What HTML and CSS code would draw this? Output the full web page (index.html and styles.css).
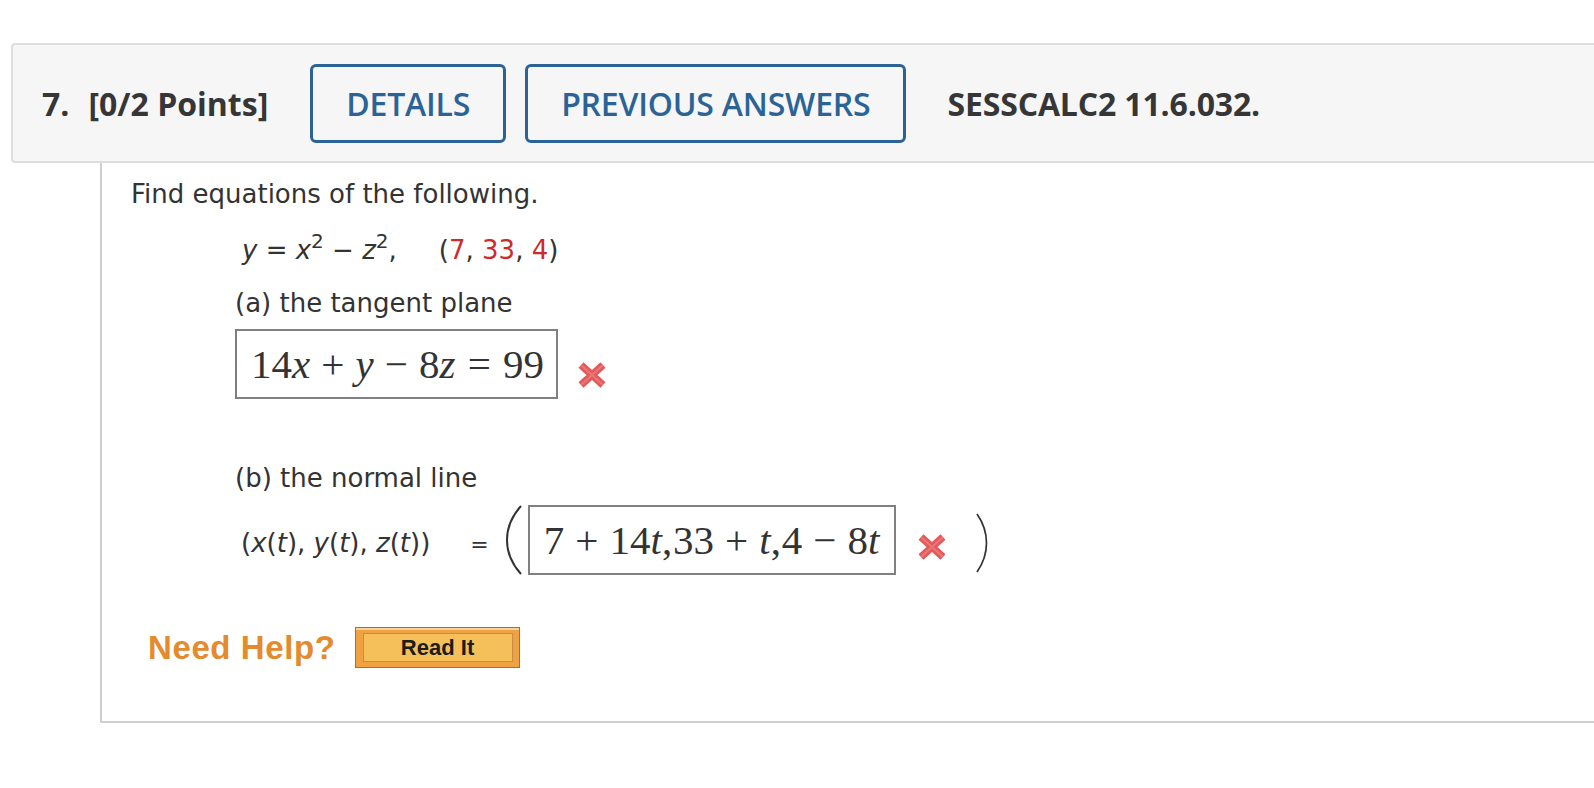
FILE: index.html
```html
<!DOCTYPE html>
<html>
<head>
<meta charset="utf-8">
<link rel="stylesheet" href="styles.css">
</head>
<body>
<div class="page">
  <div class="qheader">
    <span class="qnum">7.</span>
    <span class="qpts">[0/2 Points]</span>
    <div class="qbtn">DETAILS</div>
    <div class="qbtn">PREVIOUS ANSWERS</div>
    <span class="qref">SESSCALC2 11.6.032.</span>
  </div>
  <div class="qbody">
    <p class="intro">Find equations of the following.</p>
    <div class="indent">
      <p class="eq"><i>y</i> = <i>x</i><sup>2</sup> − <i>z</i><sup>2</sup>,<span class="pt">(<span class="red">7</span>, <span class="red">33</span>, <span class="red">4</span>)</span></p>
      <p class="part">(a) the tangent plane</p>
      <div class="ansrow">
        <div class="mbox"><span class="mn">14</span><span class="mi">x</span><span class="mo">+</span><span class="mi">y</span><span class="mo">−</span><span class="mn">8</span><span class="mi">z</span><span class="mrel">=</span><span class="mn">99</span></div>
        <svg class="xmark xmark-a" width="28" height="26" viewBox="0 0 28 26"><path d="M3 3 L25 23 M25 3 L3 23" stroke="#e35a5c" stroke-width="7.5" fill="none"/><path d="M3 3 L25 23 M25 3 L3 23" stroke="#f09090" stroke-width="2" fill="none" opacity="0.55"/></svg>
      </div>
      <p class="part partb">(b) the normal line</p>
      <div class="ansrow2">
        <span class="lbl">(<i>x</i>(<i>t</i>), <i>y</i>(<i>t</i>), <i>z</i>(<i>t</i>))<span class="eqsign">=</span></span>
        <svg class="paren lparen" width="20" height="70" viewBox="0 0 20 70"><path d="M18 1 C8 12 4 24 4 35 C4 46 8 58 18 69" stroke="#333" stroke-width="2" fill="none"/></svg>
        <div class="mbox mbox2"><span class="mn">7</span><span class="mo">+</span><span class="mn">14</span><span class="mi">t</span><span class="mp">,</span><span class="mn">33</span><span class="mo">+</span><span class="mi">t</span><span class="mp">,</span><span class="mn">4</span><span class="mo">−</span><span class="mn">8</span><span class="mi">t</span></div>
        <svg class="xmark xmark-b" width="28" height="26" viewBox="0 0 28 26"><path d="M3 3 L25 23 M25 3 L3 23" stroke="#e35a5c" stroke-width="7.5" fill="none"/><path d="M3 3 L25 23 M25 3 L3 23" stroke="#f09090" stroke-width="2" fill="none" opacity="0.55"/></svg>
        <svg class="paren rparen" width="14" height="60" viewBox="0 0 14 60"><path d="M2 1 C9 11 11.5 21 11.5 30 C11.5 39 9 49 2 59" stroke="#333" stroke-width="1.7" fill="none"/></svg>
      </div>
    </div>
    <div class="help">
      <span class="needhelp">Need Help?</span>
      <div class="readit"><span class="readit-in">Read It</span></div>
    </div>
  </div>
</div>
</body>
</html>
```

FILE: styles.css
```css
body {
  margin: 0;
  background: #ffffff;
  font-family: "DejaVu Sans", Verdana, sans-serif;
}

.page {
  padding: 43px 0 0 11px;
}

.qheader {
  display: flex;
  align-items: center;
  box-sizing: border-box;
  height: 120px;
  background: #f6f6f6;
  border: 2px solid #dedede;
  border-right: none;
  border-radius: 4px 0 0 4px;
  padding-left: 29px;
  font-family: "Open Sans", sans-serif;
  color: #363636;
  font-size: 32px;
}

.qnum {
  font-weight: 700;
  margin-right: 19px;
}

.qpts {
  font-weight: 700;
  margin-right: 42px;
}

.qbtn {
  box-sizing: border-box;
  height: 79px;
  display: flex;
  align-items: center;
  padding: 0 33px;
  border: 3px solid #2c6397;
  border-radius: 6px;
  color: #2c6397;
  font-weight: 600;
  letter-spacing: -0.2px;
}

.qbtn + .qbtn {
  margin-left: 19px;
}

.qref {
  margin-left: 41px;
  font-weight: 700;
  letter-spacing: -0.15px;
}

.qbody {
  margin-left: 89px;
  border-left: 2px solid #cfcfcf;
  border-bottom: 2px solid #cfcfcf;
  padding: 15px 0 53px 29px;
  color: #333333;
  font-size: 26px;
  line-height: 32px;
}

.qbody p {
  margin: 0;
}

.indent {
  padding-left: 104px;
}

.qbody .eq {
  margin: 24px 0 0 7px;
}

.eq sup {
  font-size: 20px;
  line-height: 0;
  vertical-align: 11px;
}

.pt {
  margin-left: 42px;
}

.red {
  color: #cc2b2b;
}

.qbody .part {
  margin-top: 21px;
}

.ansrow {
  display: flex;
  align-items: center;
  margin-top: 10px;
}

.mbox {
  box-sizing: border-box;
  height: 70px;
  display: flex;
  align-items: center;
  border: 2px solid #808080;
  padding: 0 12px 0 14px;
  font-family: "Liberation Serif", "Times New Roman", serif;
  font-size: 41px;
  color: #333333;
}

.mi {
  font-style: italic;
}

.mo {
  margin: 0 0.27em;
}

.mrel {
  margin: 0 0.3em;
}

.mp {
  margin-right: 0.02em;
}

.xmark-a {
  margin-left: 20px;
  margin-top: 22px;
}

.qbody .partb {
  margin-top: 63px;
}

.ansrow2 {
  display: flex;
  align-items: center;
  margin-top: 11px;
}

.lbl {
  padding-top: 8px;
  margin-left: 6px;
}

.eqsign {
  margin-left: 40px;
  font-size: 22px;
}

.lparen {
  margin-left: 14px;
}

.mbox2 {
  margin-left: 5px;
  padding: 0 15px 0 14px;
}

.xmark-b {
  margin-left: 22px;
  margin-top: 14px;
}

.rparen {
  margin-left: 29px;
  margin-top: 6px;
}

.help {
  display: flex;
  align-items: center;
  margin-top: 52px;
  padding-left: 17px;
}

.needhelp {
  font-family: "Liberation Sans", Arial, sans-serif;
  font-weight: 700;
  font-size: 33px;
  line-height: 36px;
  letter-spacing: 0.6px;
  color: #e38b2d;
}

.readit {
  box-sizing: border-box;
  width: 165px;
  height: 41px;
  margin-left: 19px;
  padding: 5px 6px 5px 7px;
  background: #f0a142;
  border: 1px solid #a66f34;
  box-shadow: inset 0 2px 0 #f8d29c;
}

.readit-in {
  box-sizing: border-box;
  display: flex;
  align-items: center;
  justify-content: center;
  height: 100%;
  background: #f5c059;
  border: 1px solid #c68d46;
  font-family: "Liberation Sans", Arial, sans-serif;
  font-weight: 700;
  font-size: 22px;
  color: #1c1c1c;
}
```
